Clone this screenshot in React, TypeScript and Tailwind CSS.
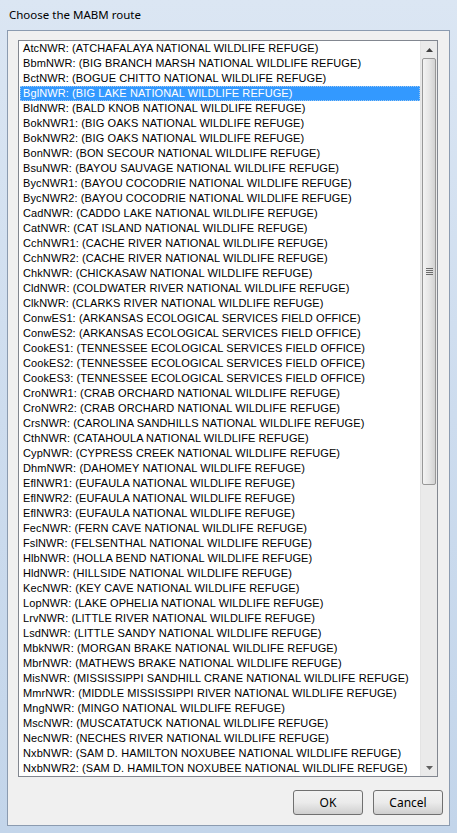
import React from 'react';

const routes: string[] = [
  'AtcNWR: (ATCHAFALAYA NATIONAL WILDLIFE REFUGE)',
  'BbmNWR: (BIG BRANCH MARSH NATIONAL WILDLIFE REFUGE)',
  'BctNWR: (BOGUE CHITTO NATIONAL WILDLIFE REFUGE)',
  'BglNWR: (BIG LAKE NATIONAL WILDLIFE REFUGE)',
  'BldNWR: (BALD KNOB NATIONAL WILDLIFE REFUGE)',
  'BokNWR1: (BIG OAKS NATIONAL WILDLIFE REFUGE)',
  'BokNWR2: (BIG OAKS NATIONAL WILDLIFE REFUGE)',
  'BonNWR: (BON SECOUR NATIONAL WILDLIFE REFUGE)',
  'BsuNWR: (BAYOU SAUVAGE NATIONAL WILDLIFE REFUGE)',
  'BycNWR1: (BAYOU COCODRIE NATIONAL WILDLIFE REFUGE)',
  'BycNWR2: (BAYOU COCODRIE NATIONAL WILDLIFE REFUGE)',
  'CadNWR: (CADDO LAKE NATIONAL WILDLIFE REFUGE)',
  'CatNWR: (CAT ISLAND NATIONAL WILDLIFE REFUGE)',
  'CchNWR1: (CACHE RIVER NATIONAL WILDLIFE REFUGE)',
  'CchNWR2: (CACHE RIVER NATIONAL WILDLIFE REFUGE)',
  'ChkNWR: (CHICKASAW NATIONAL WILDLIFE REFUGE)',
  'CldNWR: (COLDWATER RIVER NATIONAL WILDLIFE REFUGE)',
  'ClkNWR: (CLARKS RIVER NATIONAL WILDLIFE REFUGE)',
  'ConwES1: (ARKANSAS ECOLOGICAL SERVICES FIELD OFFICE)',
  'ConwES2: (ARKANSAS ECOLOGICAL SERVICES FIELD OFFICE)',
  'CookES1: (TENNESSEE ECOLOGICAL SERVICES FIELD OFFICE)',
  'CookES2: (TENNESSEE ECOLOGICAL SERVICES FIELD OFFICE)',
  'CookES3: (TENNESSEE ECOLOGICAL SERVICES FIELD OFFICE)',
  'CroNWR1: (CRAB ORCHARD NATIONAL WILDLIFE REFUGE)',
  'CroNWR2: (CRAB ORCHARD NATIONAL WILDLIFE REFUGE)',
  'CrsNWR: (CAROLINA SANDHILLS NATIONAL WILDLIFE REFUGE)',
  'CthNWR: (CATAHOULA NATIONAL WILDLIFE REFUGE)',
  'CypNWR: (CYPRESS CREEK NATIONAL WILDLIFE REFUGE)',
  'DhmNWR: (DAHOMEY NATIONAL WILDLIFE REFUGE)',
  'EflNWR1: (EUFAULA NATIONAL WILDLIFE REFUGE)',
  'EflNWR2: (EUFAULA NATIONAL WILDLIFE REFUGE)',
  'EflNWR3: (EUFAULA NATIONAL WILDLIFE REFUGE)',
  'FecNWR: (FERN CAVE NATIONAL WILDLIFE REFUGE)',
  'FslNWR: (FELSENTHAL NATIONAL WILDLIFE REFUGE)',
  'HlbNWR: (HOLLA BEND NATIONAL WILDLIFE REFUGE)',
  'HldNWR: (HILLSIDE NATIONAL WILDLIFE REFUGE)',
  'KecNWR: (KEY CAVE NATIONAL WILDLIFE REFUGE)',
  'LopNWR: (LAKE OPHELIA NATIONAL WILDLIFE REFUGE)',
  'LrvNWR: (LITTLE RIVER NATIONAL WILDLIFE REFUGE)',
  'LsdNWR: (LITTLE SANDY NATIONAL WILDLIFE REFUGE)',
  'MbkNWR: (MORGAN BRAKE NATIONAL WILDLIFE REFUGE)',
  'MbrNWR: (MATHEWS BRAKE NATIONAL WILDLIFE REFUGE)',
  'MisNWR: (MISSISSIPPI SANDHILL CRANE NATIONAL WILDLIFE REFUGE)',
  'MmrNWR: (MIDDLE MISSISSIPPI RIVER NATIONAL WILDLIFE REFUGE)',
  'MngNWR: (MINGO NATIONAL WILDLIFE REFUGE)',
  'MscNWR: (MUSCATATUCK NATIONAL WILDLIFE REFUGE)',
  'NecNWR: (NECHES RIVER NATIONAL WILDLIFE REFUGE)',
  'NxbNWR: (SAM D. HAMILTON NOXUBEE NATIONAL WILDLIFE REFUGE)',
  'NxbNWR2: (SAM D. HAMILTON NOXUBEE NATIONAL WILDLIFE REFUGE)',
];

const SELECTED = 3;

const ArrowUp = () => (
  <svg width="7" height="4" viewBox="0 0 7 4">
    <path d="M0 4 L3.5 0 L7 4 Z" fill="#404040" />
  </svg>
);

const ArrowDown = () => (
  <svg width="7" height="4" viewBox="0 0 7 4">
    <path d="M0 0 L3.5 4 L7 0 Z" fill="#606060" />
  </svg>
);

const ScrollBar: React.FC = () => (
  <div className="w-[17px] flex flex-col bg-[#eaeaea] border-l border-[#e3e3e3]">
    <div className="h-[17px] flex items-center justify-center">
      <ArrowUp />
    </div>
    <div className="flex-1 flex flex-col">
      {/* thumb */}
      <div className="h-[427px] mx-px rounded-[2px] border border-[#979797] bg-gradient-to-r from-[#f3f3f3] via-[#e6e6e6] to-[#d2d2d2] flex items-center justify-center">
        <div className="flex flex-col gap-px">
          <div className="w-[7px] h-px bg-[#6c6c6c]" />
          <div className="w-[7px] h-px bg-[#6c6c6c]" />
          <div className="w-[7px] h-px bg-[#6c6c6c]" />
          <div className="w-[7px] h-px bg-[#6c6c6c]" />
        </div>
      </div>
      <div className="flex-1" />
    </div>
    <div className="h-[17px] flex items-center justify-center">
      <ArrowDown />
    </div>
  </div>
);

export default function App() {
  return (
    <div className="w-[457px] h-[833px] flex flex-col bg-gradient-to-b from-[#dbe6f3] via-[#cddcee] to-[#c3d5ea] font-['Liberation_Sans',Arial,sans-serif]">
      {/* Title bar */}
      <div className="h-[30px] pl-[9px] flex items-center text-[11.5px] text-black font-['Segoe_UI','Noto_Sans',sans-serif]">
        Choose the MABM route
      </div>

      {/* Client area */}
      <div className="flex-1 mx-[7px] mb-[7px] border border-[#8b9bb0] bg-[#f0f0f0] flex flex-col">
        <div className="mt-[9px] ml-[10px] mr-[11px] h-[737px] border border-[#828790] bg-white flex">
          <div className="flex-1 flex flex-col pl-px overflow-hidden">
            {routes.map((r, i) => (
              <div
                key={r}
                className={
                  i === SELECTED
                    ? 'h-[15px] leading-[13px] pl-[2px] text-[11px] tracking-[0.1px] whitespace-nowrap bg-[#3399ff] text-white border border-dotted border-[#9ec8f0]'
                    : 'h-[15px] leading-[15px] pl-[3px] text-[11px] tracking-[0.1px] whitespace-nowrap text-black'
                }
              >
                {r}
              </div>
            ))}
          </div>
          <ScrollBar />
        </div>

        {/* Buttons */}
        <div className="flex justify-end gap-[10px] mt-[13px] mr-[6px]">
          <button className="w-[70px] h-[25px] border border-[#707070] rounded-[3px] bg-gradient-to-b from-[#f2f2f2] via-[#ebebeb] to-[#cfcfcf] text-[12px] text-black font-['Segoe_UI','Noto_Sans',sans-serif]">
            OK
          </button>
          <button className="w-[70px] h-[25px] border border-[#707070] rounded-[3px] bg-gradient-to-b from-[#f2f2f2] via-[#ebebeb] to-[#cfcfcf] text-[12px] text-black font-['Segoe_UI','Noto_Sans',sans-serif]">
            Cancel
          </button>
        </div>
      </div>
    </div>
  );
}
